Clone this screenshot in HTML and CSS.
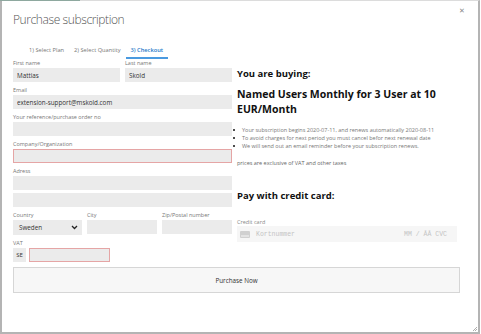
FILE: index.html
```html
<!DOCTYPE html>
<html lang="en">
<head>
    <meta charset="UTF-8">
    <title>Purchase subscription</title>
    <link rel="stylesheet" href="styles.css">
</head>
<body>

    <div class="dialog">
        <div class="dialog-top"></div>
        <span class="close">&#x2715;</span>

        <h1 class="title">Purchase subscription</h1>

        <ul class="steps">
            <li>1) Select Plan</li>
            <li>2) Select Quantity</li>
            <li class="active">3) Checkout</li>
        </ul>

        <div class="checkout">
            <!-- customer details -->
            <div class="form">
                <div class="row two">
                    <div class="field">
                        <label>First name</label>
                        <input type="text" value="Mattias">
                    </div>
                    <div class="field">
                        <label>Last name</label>
                        <input type="text" value="Skold">
                    </div>
                </div>

                <div class="field">
                    <label>Email</label>
                    <input type="text" value="extension-support@mskold.com">
                </div>

                <div class="field">
                    <label>Your reference/purchase order no</label>
                    <input type="text">
                </div>

                <div class="field">
                    <label>Company/Organization</label>
                    <input type="text" class="invalid">
                </div>

                <div class="field">
                    <label>Adress</label>
                    <input type="text">
                    <input type="text" class="second">
                </div>

                <div class="row three">
                    <div class="field">
                        <label>Country</label>
                        <div class="select">
                            <span>Sweden</span>
                            <svg width="7" height="5" viewBox="0 0 7 5"><path d="M1 1 L3.5 3.5 L6 1" fill="none" stroke="#222" stroke-width="1.3"/></svg>
                        </div>
                    </div>
                    <div class="field">
                        <label>City</label>
                        <input type="text">
                    </div>
                    <div class="field">
                        <label>Zip/Postal number</label>
                        <input type="text">
                    </div>
                </div>

                <div class="field">
                    <label>VAT</label>
                    <div class="vat">
                        <span class="vat-prefix">SE</span>
                        <input type="text" class="invalid">
                    </div>
                </div>
            </div>

            <!-- order summary -->
            <div class="summary">
                <h3>You are buying:</h3>
                <h2>Named Users Monthly for 3 User at 10 EUR/Month</h2>
                <ul class="terms">
                    <li>Your subscription begins 2020-07-11, and renews automatically 2020-08-11</li>
                    <li>To avoid charges for next period you must cancel befor next renewal date</li>
                    <li>We will send out an email reminder before your subscription renews.</li>
                </ul>
                <p class="taxes">prices are exclusive of VAT and other taxes</p>

                <h3 class="pay">Pay with credit card:</h3>
                <label class="card-label">Credit card</label>
                <div class="card">
                    <svg width="10" height="7" viewBox="0 0 10 7"><rect width="10" height="7" rx="1" fill="#d0d0d0"/><rect x="1" y="4.5" width="8" height="1" fill="#f5f5f5"/></svg>
                    <span class="card-number">Kortnummer</span>
                    <span class="card-expiry">MM / ÅÅ CVC</span>
                </div>
            </div>
        </div>

        <button class="purchase-btn">Purchase Now</button>

        <svg class="grip" width="6" height="6" viewBox="0 0 6 6"><path d="M5 1 L1 5 M5 3 L3 5" stroke="#999" stroke-width="0.8"/></svg>
    </div>

</body>
</html>
```

FILE: styles.css
```css
* {
    margin: 0;
    padding: 0;
    box-sizing: border-box;
}

body {
    font-family: "Open Sans", "Noto Sans", sans-serif;
    background-color: white;
    color: #333;
}

.dialog {
    position: relative;
    width: 480px;
    height: 334px;
    border: 2px solid #b4b4b4;
    border-top: 1px solid #dcdcdc;
    padding: 9px 11px 0 11px;
    background: white;
}

/* strip of the page behind showing over the top edge */
.dialog-top {
    position: absolute;
    top: -1px;
    left: -2px;
    width: 80px;
    height: 1px;
    background: #8ea89f;
}

.close {
    position: absolute;
    top: 5px;
    right: 13px;
    font-size: 7px;
    color: #888;
}

.title {
    font-size: 12px;
    font-weight: 300;
    line-height: 20px;
    color: #555;
    letter-spacing: -0.4px;
}

.steps {
    list-style: none;
    display: flex;
    margin-top: 14px;
    padding-left: 11px;
}

.steps li {
    font-size: 5.7px;
    line-height: 10px;
    color: #777;
    padding: 1px 5px 2px 5px;
    border-bottom: 2px solid transparent;
}

.steps li.active {
    color: #1e78c8;
    font-weight: 600;
    border-bottom-color: #4a9ae0;
}

.checkout {
    display: grid;
    grid-template-columns: 219px 1fr;
    gap: 5px;
}

.form .field {
    display: flex;
    flex-direction: column;
    margin-top: 4px;
}

.form > .row:first-child .field {
    margin-top: 0;
}

.row {
    display: grid;
    gap: 5px;
}

.row.two {
    grid-template-columns: 1fr 1fr;
}

.row.three {
    grid-template-columns: 69px 1fr 1fr;
}

label {
    font-size: 5.5px;
    line-height: 8px;
    color: #777;
    margin-bottom: 1px;
}

input {
    width: 100%;
    height: 14px;
    border: none;
    background: #ebebeb;
    font-family: inherit;
    font-size: 6.3px;
    color: #333;
    padding: 0 4px;
    outline: none;
}

input.second {
    margin-top: 3px;
}

input.invalid {
    border: 1px solid #e5a5a5;
}

.select {
    height: 15px;
    background: #ebebeb;
    display: flex;
    align-items: center;
    justify-content: space-between;
    padding: 0 4px 0 6px;
    font-size: 6.3px;
    color: #333;
}

.vat {
    display: flex;
    gap: 3px;
}

.vat-prefix {
    width: 13px;
    height: 14px;
    background: #ebebeb;
    font-size: 6px;
    line-height: 14px;
    text-align: center;
    color: #333;
}

.vat input {
    width: 81px;
}

.summary h3 {
    font-size: 9.5px;
    font-weight: 700;
    line-height: 14px;
    color: #111;
    margin-top: 8px;
}

.summary h2 {
    font-size: 10.5px;
    font-weight: 700;
    line-height: 15px;
    color: #111;
    margin-top: 6px;
    padding-right: 30px;
}

.terms {
    list-style: none;
    margin-top: 9px;
    padding-left: 5px;
    font-size: 5.5px;
    line-height: 8px;
    color: #777;
}

.terms li {
    position: relative;
}

.terms li::before {
    content: "";
    position: absolute;
    left: -9px;
    top: 3px;
    width: 2px;
    height: 2px;
    border-radius: 50%;
    background: #111;
}

.taxes {
    margin-top: 9px;
    font-size: 5.5px;
    line-height: 8px;
    color: #666;
}

.summary h3.pay {
    margin-top: 22px;
}

.card-label {
    display: block;
    margin-top: 15px;
    margin-bottom: 0;
    color: #888;
}

.card {
    display: flex;
    align-items: center;
    width: 220px;
    height: 16px;
    background: #f6f6f6;
    padding: 0 10px 0 3px;
    font-family: "Liberation Mono", "DejaVu Sans Mono", monospace;
    font-size: 6.5px;
    color: #c4c4c4;
}

.card-number {
    margin-left: 6px;
}

.card-expiry {
    margin-left: auto;
}

.purchase-btn {
    display: block;
    width: 447px;
    height: 26px;
    margin-top: 5px;
    background: #f7f7f7;
    border: 1px solid #d6d6d6;
    font-family: inherit;
    font-size: 6.3px;
    color: #333;
}

.grip {
    position: absolute;
    right: 0;
    bottom: 0;
}
```
